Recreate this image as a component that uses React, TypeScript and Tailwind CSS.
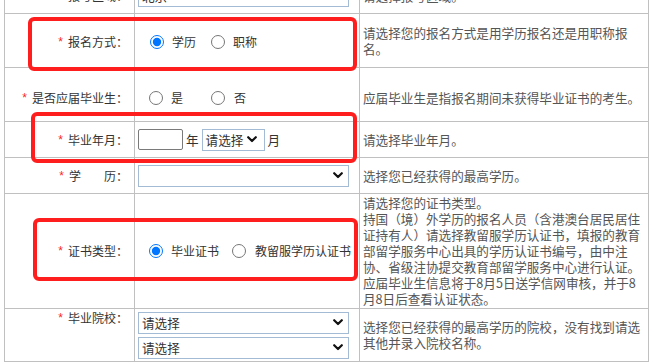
import React from "react";

function Chevron() {
  return (
    <svg width="10" height="7" viewBox="0 0 10 7" className="block">
      <path d="M1.2 1.2 L5 5 L8.8 1.2" fill="none" stroke="#111" strokeWidth="2.2" strokeLinecap="round" strokeLinejoin="round" />
    </svg>
  );
}

function Star() {
  return <span className="mr-[5px] font-['Liberation_Sans',sans-serif] text-[12px] text-[#ff1f1f]">*</span>;
}

function Radio({ name, checked }: { name: string; checked?: boolean }) {
  return <input type="radio" name={name} defaultChecked={checked} className="m-0 h-[14px] w-[14px] shrink-0" />;
}

const cell = "border-r border-b border-[#c0c0c0]";
const lab = "border-r border-b border-[#c0c0c0] flex justify-end pr-[6px] text-[12px]";

export default function App() {
  return (
    <div className="relative h-[363px] w-[656px] overflow-hidden bg-white font-['Noto_Sans_CJK_SC','Noto_Sans',sans-serif] text-[12.6px] leading-[16px] text-[#333]">
      <div className="ml-[4px] mt-[-22px] w-[645px] border-l border-[#c0c0c0]">
        {/* row 1 (partial) */}
        <div className="grid h-[36px] grid-cols-[130px_225px_289px]">
          <div className={`${lab} items-center`}>
            <Star />报考区域：
          </div>
          <div className={`${cell} flex items-center pl-[3px]`}>
            <div className="flex h-[22px] w-[211px] items-center border border-[#a3bbd4] px-[3px]">北京</div>
          </div>
          <div className={`${cell} flex items-center pl-[3px] text-[#555]`}>请选择报考区域。</div>
        </div>

        {/* row 2 */}
        <div className="grid h-[54px] grid-cols-[130px_225px_289px]">
          <div className={`${lab} items-center pt-[3px]`}>
            <Star />报名方式：
          </div>
          <div className={`${cell} flex items-center pl-[15px] pt-[3px] text-[12px]`}>
            <Radio name="bmfs" checked />
            <span className="ml-[8px]">学历</span>
            <span className="ml-[15px] flex items-center">
              <Radio name="bmfs" />
              <span className="ml-[8px]">职称</span>
            </span>
          </div>
          <div className={`${cell} flex items-center pl-[3px] pr-[2px] text-[#555]`}>
            <p>请选择您的报名方式是用学历报名还是用职称报名。</p>
          </div>
        </div>

        {/* row 3 */}
        <div className="grid h-[54px] grid-cols-[130px_225px_289px]">
          <div className={`${lab} items-center pt-[6px]`}>
            <Star />是否应届毕业生：
          </div>
          <div className={`${cell} flex items-center pl-[14px] pt-[6px] text-[12px]`}>
            <Radio name="yj" />
            <span className="ml-[8px]">是</span>
            <span className="ml-[28px] flex items-center">
              <Radio name="yj" />
              <span className="ml-[9px]">否</span>
            </span>
          </div>
          <div className={`${cell} flex items-center pl-[3px] pt-[6px] text-[#555]`}>
            应届毕业生是指报名期间未获得毕业证书的考生。
          </div>
        </div>

        {/* row 4 */}
        <div className="grid h-[36px] grid-cols-[130px_225px_289px]">
          <div className={`${lab} items-center`}>
            <Star />毕业年月：
          </div>
          <div className={`${cell} flex items-center pl-[3px]`}>
            <div className="h-[21px] w-[45px] rounded-[2px] border border-[#7a7a7a]" />
            <span className="ml-[3px]">年</span>
            <div className="ml-[3px] flex h-[22px] w-[63px] items-center justify-between border border-[#a3bbd4] pl-[3px] pr-[7px]">
              <span>请选择</span>
              <Chevron />
            </div>
            <span className="ml-[3px]">月</span>
          </div>
          <div className={`${cell} flex items-center pl-[3px] text-[#555]`}>请选择毕业年月。</div>
        </div>

        {/* row 5 */}
        <div className="grid h-[36px] grid-cols-[130px_225px_289px]">
          <div className={`${lab} items-center`}>
            <Star />学<span className="inline-block w-[23px]" />历：
          </div>
          <div className={`${cell} flex items-center pl-[3px]`}>
            <div className="flex h-[22px] w-[211px] items-center justify-end border border-[#a3bbd4] pr-[5px]">
              <Chevron />
            </div>
          </div>
          <div className={`${cell} flex items-center pl-[3px] text-[#555]`}>选择您已经获得的最高学历。</div>
        </div>

        {/* row 6 */}
        <div className="grid h-[115px] grid-cols-[130px_225px_289px]">
          <div className={`${lab} items-center`}>
            <Star />证书类型：
          </div>
          <div className={`${cell} flex items-center pl-[14px] text-[12px]`}>
            <Radio name="zs" checked />
            <span className="ml-[8px] whitespace-nowrap">毕业证书</span>
            <span className="ml-[13px] flex items-center">
              <Radio name="zs" />
              <span className="ml-[9px] whitespace-nowrap">教留服学历认证书</span>
            </span>
          </div>
          <div className={`${cell} flex items-center pl-[3px] text-[#555]`}>
            <p className="whitespace-nowrap">
              请选择您的证书类型。
              <br />
              持国（境）外学历的报名人员（含港澳台居民居住
              <br />
              证持有人）请选择教留服学历认证书，填报的教育
              <br />
              部留学服务中心出具的学历认证书编号，由中注
              <br />
              协、省级注协提交教育部留学服务中心进行认证。
              <br />
              应届毕业生信息将于8月5日送学信网审核，并于8
              <br />
              月8日后查看认证状态。
            </p>
          </div>
        </div>

        {/* row 7 */}
        <div className="grid h-[53px] grid-cols-[130px_225px_289px]">
          <div className={`${lab} items-start pt-[1px]`}>
            <Star />毕业院校：
          </div>
          <div className={`${cell} flex flex-col justify-center gap-[3px] pl-[3px]`}>
            <div className="flex h-[22px] w-[211px] items-center justify-between border border-[#a3bbd4] pl-[3px] pr-[5px]">
              <span>请选择</span>
              <Chevron />
            </div>
            <div className="flex h-[22px] w-[211px] items-center justify-between border border-[#a3bbd4] pl-[3px] pr-[5px]">
              <span>请选择</span>
              <Chevron />
            </div>
          </div>
          <div className={`${cell} flex items-center pl-[3px] text-[#555]`}>
            <p>选择您已经获得的最高学历的院校，没有找到请选其他并录入院校名称。</p>
          </div>
        </div>
      </div>

      {/* red annotation boxes */}
      <div className="absolute left-[28px] top-[17px] h-[54px] w-[329px] rounded-[6px] border-[4px] border-[#ff1e1e]" />
      <div className="absolute left-[31px] top-[112px] h-[51px] w-[326px] rounded-[6px] border-[4px] border-[#ff1e1e]" />
      <div className="absolute left-[33px] top-[218px] h-[63px] w-[325px] rounded-[6px] border-[4px] border-[#ff1e1e]" />
    </div>
  );
}
